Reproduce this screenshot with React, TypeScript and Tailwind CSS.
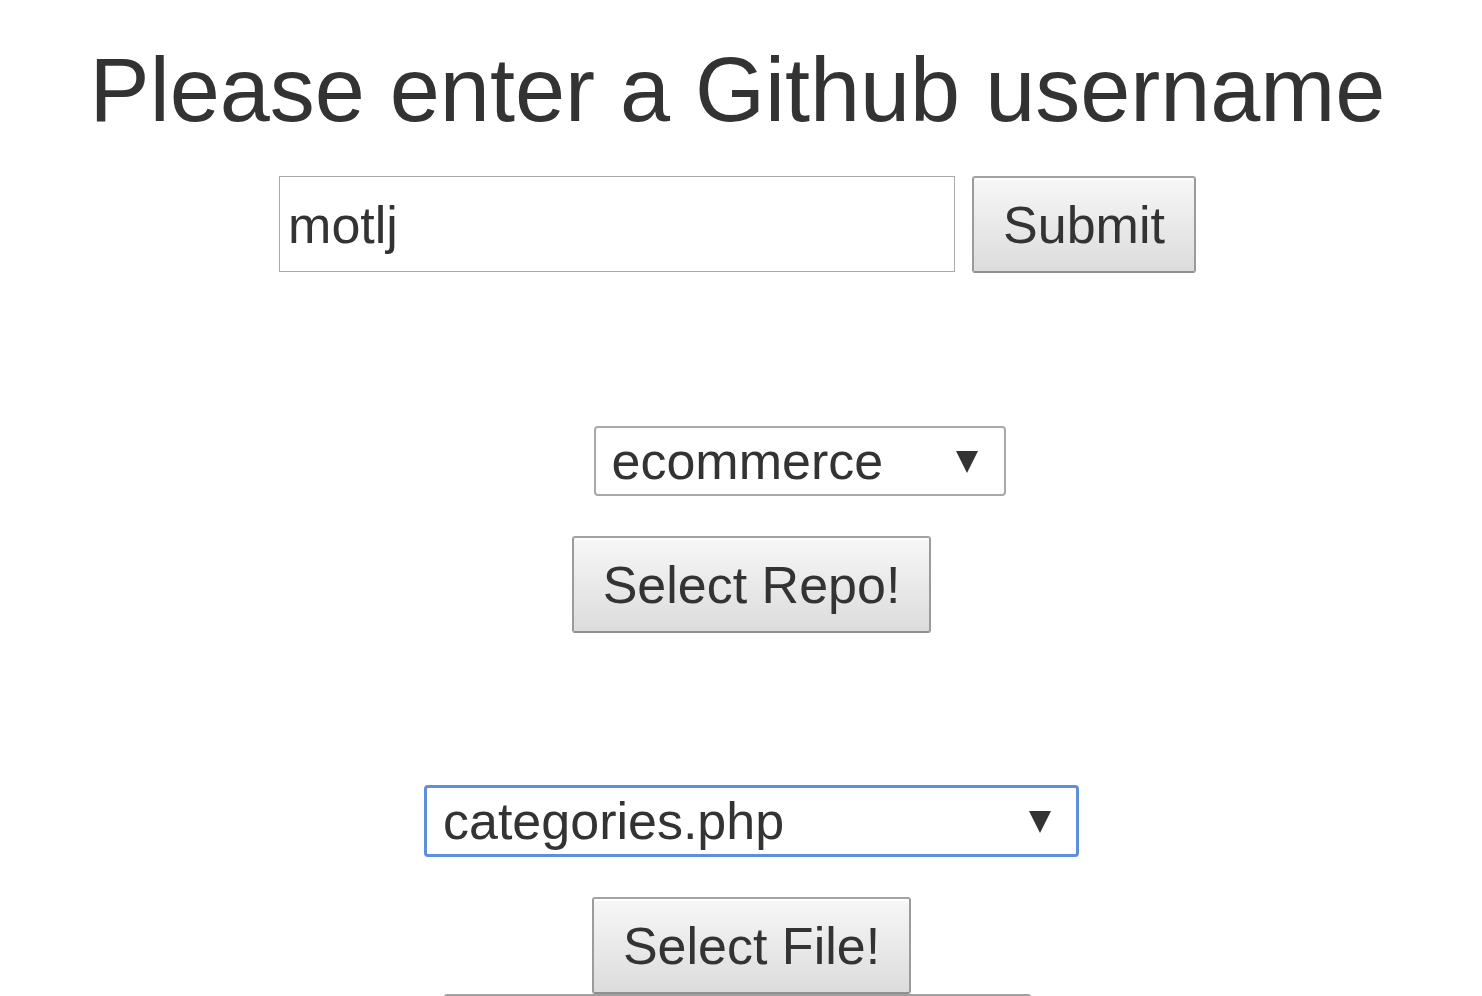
const buttonClass =
  "h-[97px] rounded-[3px] border-2 border-t-[#a3a3a3] border-x-[#9b9b9b] border-b-[#8f8f8f] bg-linear-to-b from-[#f7f7f7] to-[#dcdcdc] px-[29px] pt-px text-[52px] leading-[60px] text-[#333] shadow-[inset_0_2px_0_#ffffff]";

type PickerProps = {
  label: string;
  options: string[];
  className: string;
};

function Picker({ label, options, className }: PickerProps) {
  return (
    <div className="relative flex items-center">
      <select
        aria-label={label}
        className={`appearance-none rounded-[4px] bg-white pr-16 pl-4 text-[52px] leading-[62px] text-[#333] outline-none ${className}`}
      >
        {options.map((option) => (
          <option key={option}>{option}</option>
        ))}
      </select>
      <svg
        className="pointer-events-none absolute right-7 mt-0.5 h-[22px] w-[22px]"
        viewBox="0 0 22 22"
        aria-hidden="true"
      >
        <path d="M0 0H22L11 22Z" fill="#333" />
      </svg>
    </div>
  );
}

export default function App() {
  return (
    <main className="flex h-screen flex-col items-center overflow-hidden bg-white pr-[7px] font-['Liberation_Sans',Arial,sans-serif] text-[#333]">
      <h1 className="mt-10 shrink-0 text-[90px] leading-[100px] whitespace-nowrap">
        Please enter a Github username
      </h1>

      <form className="mt-9 flex shrink-0 gap-[17px]" onSubmit={(e) => e.preventDefault()}>
        <input
          type="text"
          aria-label="Github username"
          defaultValue="motlj"
          className="h-24 w-[676px] border border-[#a9a9a9] bg-white px-2 pt-0.5 text-[52px] leading-[62px] outline-none"
        />
        <button type="submit" className={buttonClass}>
          Submit
        </button>
      </form>

      <form
        className="mt-[153px] flex shrink-0 flex-col items-center gap-10 pl-7"
        onSubmit={(e) => e.preventDefault()}
      >
        <div className="pl-24">
          <Picker
            label="Repository"
            options={["ecommerce"]}
            className="h-[70px] w-[412px] border-2 border-[#a9a9a9]"
          />
        </div>
        <button type="submit" className={buttonClass}>
          Select Repo!
        </button>
      </form>

      <form
        className="mt-[152px] flex shrink-0 flex-col items-center gap-10 pl-7"
        onSubmit={(e) => e.preventDefault()}
      >
        <Picker
          label="File"
          options={["categories.php"]}
          className="h-[72px] w-[655px] border-3 border-[#5e8fdc]"
        />
        <button type="submit" className={buttonClass}>
          Select File!
        </button>
      </form>

      <textarea
        aria-label="File contents"
        className="h-40 w-[587px] shrink-0 resize-none rounded-[3px] border-2 border-[#a0a0a0] bg-white outline-none"
      />
    </main>
  );
}
